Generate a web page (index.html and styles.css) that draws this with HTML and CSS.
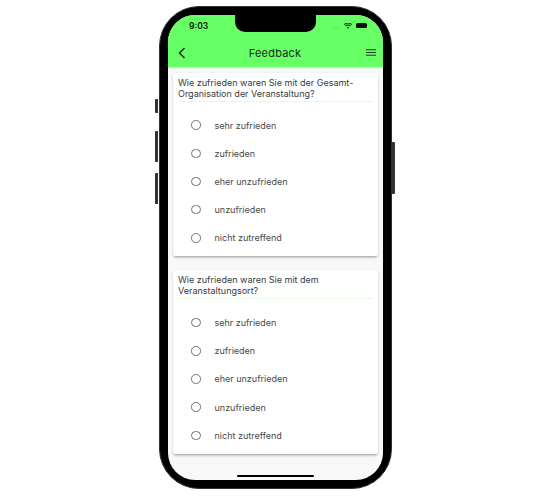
FILE: index.html
```html
<!DOCTYPE html>
<html lang="de">
<head>
<meta charset="utf-8">
<title>Feedback</title>
<link rel="stylesheet" href="styles.css">
</head>
<body>
<div class="phone">
  <span class="side-btn btn-mute"></span>
  <span class="side-btn btn-up"></span>
  <span class="side-btn btn-down"></span>
  <span class="side-btn btn-power"></span>
  <div class="screen">
    <header class="appbar">
      <div class="status">
        <span class="time">9:03</span>
        <span class="status-icons">
          <span class="signal">....</span>
          <svg class="wifi" viewBox="0 0 12 9" width="8" height="6"><path d="M6 8.6 4.3 6.6a2.6 2.6 0 0 1 3.4 0zM2.9 5.2l-1.1-1.3a6.4 6.4 0 0 1 8.4 0L9.100 5.200a4.700 4.700 0 0 0-6.200 0zM.9 2.900 0 1.800a9.200 9.200 0 0 1 12 0l-.9 1.100a7.900 7.900 0 0 0-10.200 0z" fill="#111"/></svg>
          <span class="battery"></span>
        </span>
      </div>
      <div class="nav">
        <svg class="back" viewBox="0 0 8 12" width="8" height="12"><path d="M6.500 1 1.500 6l5 5" fill="none" stroke="#1c2a1c" stroke-width="1.500"/></svg>
        <span class="title">Feedback</span>
        <svg class="menu" viewBox="0 0 10 7" width="10" height="7"><path d="M0 .75h10M0 3.500h10M0 6.250h10" fill="none" stroke="#2b3a2b" stroke-width="1"/></svg>
      </div>
    </header>
    <span class="notch"></span>
    <main class="content">
      <section class="card">
        <h2 class="question">Wie zufrieden waren Sie mit der Gesamt-Organisation der Veranstaltung?</h2>
        <ul class="options">
          <li class="option"><span class="radio"></span>sehr zufrieden</li>
          <li class="option"><span class="radio"></span>zufrieden</li>
          <li class="option"><span class="radio"></span>eher unzufrieden</li>
          <li class="option"><span class="radio"></span>unzufrieden</li>
          <li class="option"><span class="radio"></span>nicht zutreffend</li>
        </ul>
      </section>
      <section class="card">
        <h2 class="question">Wie zufrieden waren Sie mit dem Veranstaltungsort?</h2>
        <ul class="options">
          <li class="option"><span class="radio"></span>sehr zufrieden</li>
          <li class="option"><span class="radio"></span>zufrieden</li>
          <li class="option"><span class="radio"></span>eher unzufrieden</li>
          <li class="option"><span class="radio"></span>unzufrieden</li>
          <li class="option"><span class="radio"></span>nicht zutreffend</li>
        </ul>
      </section>
    </main>
    <span class="home-bar"></span>
  </div>
</div>
</body>
</html>
```
FILE: styles.css
```css
* { box-sizing: border-box; }
html, body { margin: 0; height: 500px; background: #fff; overflow: hidden; }
body { display: flex; justify-content: center; padding: 6px 3px 0 0; font-family: Inter, "Liberation Sans", sans-serif; }
.phone {
  position: relative;
  width: 233px;
  height: 483px;
  background: #000;
  border: 1px solid #333;
  border-radius: 40px;
  padding: 8px;
}
.side-btn { position: absolute; width: 3px; background: #333; }
.btn-mute { left: -5px; top: 92px; height: 14px; border-radius: 1px 0 0 1px; }
.btn-up { left: -5px; top: 124px; height: 31px; border-radius: 1px 0 0 1px; }
.btn-down { left: -5px; top: 166px; height: 31px; border-radius: 1px 0 0 1px; }
.btn-power { right: -4px; top: 135px; height: 52px; border-radius: 0 1px 1px 0; }
.screen {
  position: relative;
  width: 215px;
  height: 465px;
  background: #f8f8f8;
  border-radius: 27px;
  overflow: hidden;
}
.notch {
  position: absolute;
  top: 0;
  left: 67px;
  width: 81px;
  height: 17px;
  background: #000;
  border-radius: 0 0 10px 10px;
}
.appbar {
  height: 52px;
  background: #66ff66;
  box-shadow: 0 1px 2px rgba(0,0,0,.15);
}
.status {
  height: 24px;
  padding: 6px 16px 0 21px;
  display: flex;
  justify-content: space-between;
  align-items: flex-start;
}
.time { font-size: 8.500px; font-weight: 600; line-height: 11px; color: #111; }
.status-icons { display: flex; align-items: center; gap: 4px; height: 9px; }
.signal { font-size: 5px; line-height: 6px; color: #4aa84a; letter-spacing: .6px; margin-top: 1px; }
.battery { width: 11px; height: 5px; background: #111; border-radius: 1.500px; }
.nav {
  height: 27px;
  padding: 0 7px 0 10px;
  display: flex;
  justify-content: space-between;
  align-items: center;
}
.title { font-size: 11px; line-height: 14px; color: #1d2b1d; letter-spacing: .2px; margin-left: -2px; }
.content { padding: 5.500px 5px 0; display: flex; flex-direction: column; gap: 14px; }
.card {
  background: #fff;
  border-radius: 2px;
  box-shadow: 0 2px 3px -1px rgba(0,0,0,.4), 0 0 2px rgba(0,0,0,.08);
  height: 183.500px;
  padding: 4px 5px 0;
}
.question {
  margin: 0;
  font-size: 9px;
  font-weight: 400;
  line-height: 11.200px;
  color: #3a3a3a;
  padding-right: 8px;
  border-bottom: 1px solid #e2fbe2;
  height: 25px;
}
.options { list-style: none; margin: 0; padding: 9.500px 0 0 13px; }
.option {
  display: flex;
  align-items: center;
  gap: 14px;
  height: 28.200px;
  font-size: 9px;
  color: #484848;
}
.radio {
  width: 9.500px;
  height: 9.500px;
  border: 1px solid #707070;
  border-radius: 50%;
  flex: none;
}
.home-bar {
  position: absolute;
  left: 69px;
  bottom: 3px;
  width: 77px;
  height: 2px;
  background: #000;
  border-radius: 1px;
}
```
